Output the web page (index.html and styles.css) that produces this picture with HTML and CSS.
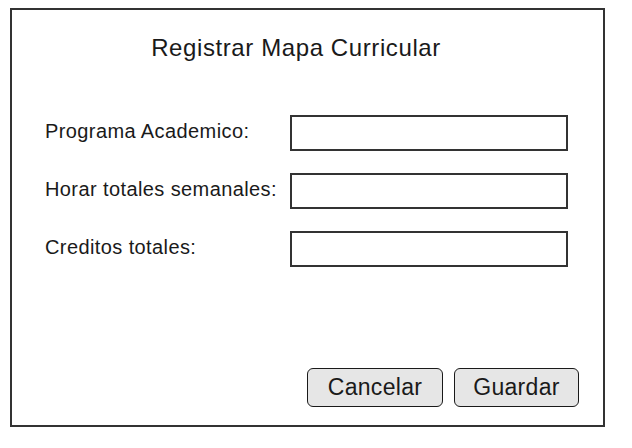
FILE: index.html
```html
<!DOCTYPE html>
<html lang="es">
<head>
<meta charset="utf-8">
<title>Registrar Mapa Curricular</title>
<link rel="stylesheet" href="styles.css">
</head>
<body>
<div class="frame">
  <h1 class="title">Registrar Mapa Curricular</h1>
  <form class="form">
    <label class="label" for="prog">Programa Academico:</label>
    <input class="field" id="prog" type="text">
    <label class="label" for="horas">Horar totales semanales:</label>
    <input class="field" id="horas" type="text">
    <label class="label" for="cred">Creditos totales:</label>
    <input class="field" id="cred" type="text">
  </form>
  <div class="actions">
    <button class="btn btn-cancel" type="button">Cancelar</button>
    <button class="btn btn-save" type="button">Guardar</button>
  </div>
</div>
</body>
</html>
```
FILE: styles.css
```css
* { box-sizing: border-box; }
html, body { margin: 0; padding: 0; background: #fff; }
body {
  font-family: "Liberation Sans", Arial, sans-serif;
  color: #1a1a1a;
}
.frame {
  margin: 8px 0 0 10px;
  width: 595px;
  height: 419px;
  border: 2px solid #333;
  display: flex;
  flex-direction: column;
  padding: 24px 24px 18px 33px;
}
.title {
  margin: 0 0 0 -32px;
  font-weight: normal;
  font-size: 24px;
  line-height: 28px;
  letter-spacing: 0.6px;
  text-align: center;
}
.form {
  margin-top: 53px;
  display: grid;
  grid-template-columns: 245px 278px;
  grid-auto-rows: 35px;
  row-gap: 23px;
  align-items: center;
}
.label {
  font-size: 20px;
  line-height: 22px;
  letter-spacing: 0.4px;
  padding-bottom: 3px;
  white-space: nowrap;
}
.field {
  width: 278px;
  height: 36px;
  border: 2px solid #333;
  background: #fff;
  margin: 0;
  padding: 0 6px;
  outline: none;
}
.actions {
  margin-top: auto;
  display: flex;
  justify-content: flex-end;
  gap: 11px;
}
.btn {
  height: 39px;
  border: 1px solid #1a1a1a;
  border-radius: 6px;
  background: #e6e6e6;
  font-family: "Liberation Sans", Arial, sans-serif;
  font-size: 23px;
  letter-spacing: 0.3px;
  color: #1a1a1a;
  padding: 0;
}
.btn-cancel { width: 136px; }
.btn-save { width: 125px; }
```
